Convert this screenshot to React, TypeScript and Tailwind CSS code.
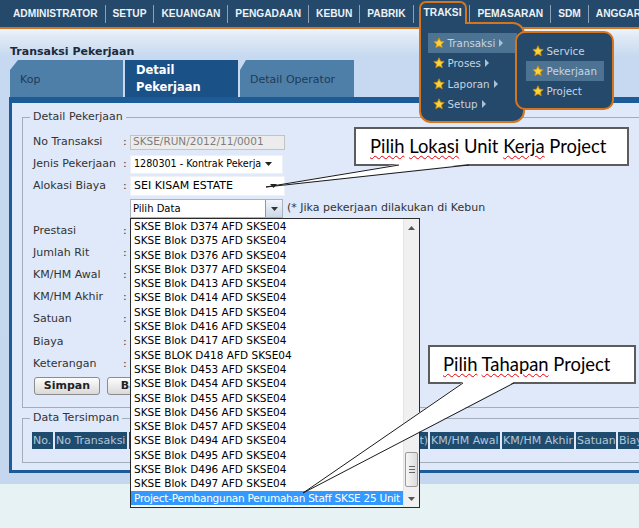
import React from 'react';

const navItems = ['ADMINISTRATOR', 'SETUP', 'KEUANGAN', 'PENGADAAN', 'KEBUN', 'PABRIK', 'TRAKSI', 'PEMASARAN', 'SDM', 'ANGGARAN'];

const blokItems = [
  ...['D374', 'D375', 'D376', 'D377', 'D413', 'D414', 'D415', 'D416', 'D417'].map((b) => `SKSE Blok ${b} AFD SKSE04`),
  'SKSE BLOK D418 AFD SKSE04',
  ...['D453', 'D454', 'D455', 'D456', 'D457', 'D494', 'D495', 'D496', 'D497'].map((b) => `SKSE Blok ${b} AFD SKSE04`),
];

const headerCells = [
  { title: 'No.', w: 'w-[21px]' },
  { title: 'No Transaksi', w: 'w-[72px]' },
  { title: 'Kendaraan', w: 'w-[90px]' },
  { title: 'Pekerjaan', w: 'w-[100px]' },
  { title: 'Prestasi (Rit)', w: 'w-[105px] text-right' },
  { title: 'KM/HM Awal', w: 'w-[70px]' },
  { title: 'KM/HM Akhir', w: 'w-[72px]' },
  { title: 'Satuan', w: 'w-[40px]' },
  { title: 'Biaya', w: 'w-[50px]' },
];

const Star = () => (
  <svg width="12" height="12" viewBox="0 0 24 24" className="shrink-0">
    <polygon
      points="12,1.5 15.1,8.3 22.5,9.1 17,14.1 18.5,21.5 12,17.8 5.5,21.5 7,14.1 1.5,9.1 8.9,8.3"
      fill="#f8d33c"
      stroke="#c8860d"
      strokeWidth="1.6"
      strokeLinejoin="round"
    />
  </svg>
);

const CaretRight = () => (
  <svg width="4" height="8" viewBox="0 0 4 8" className="ml-[4px] shrink-0">
    <polygon points="0,0 4,4 0,8" fill="#a9c0d8" />
  </svg>
);

const CaretDown = ({ color = '#222' }: { color?: string }) => (
  <svg width="7" height="4" viewBox="0 0 7 4" className="shrink-0">
    <polygon points="0,0 7,0 3.5,4" fill={color} />
  </svg>
);

const Row = ({ label, children }: { label: string; children?: React.ReactNode }) => (
  <div className="flex h-[22.2px] items-center">
    <span className="w-[88px] shrink-0 whitespace-nowrap">{label}</span>
    <span className="w-[9px] shrink-0 pl-[2px]">:</span>
    {children}
  </div>
);

const TraksiMenu = () => (
  <div className="relative ml-[5px] mr-[2px] mt-[1px] h-[22px] self-start rounded-t-[7px] border-2 border-b-0 border-[#d4761f] pl-[3px] pr-[4px] leading-[20px]">
    TRAKSI
    <div className="absolute left-[-2px] top-[19px] z-20 h-[101px] w-[106px] rounded-b-[12px] rounded-tr-[12px] border-2 border-[#d4761f] bg-[#24496a] font-['DejaVu_Sans',sans-serif] text-[10.3px] font-normal text-[#c7d4e1]">
      <div className="pl-[7px] pt-[9px]">
        {['Transaksi', 'Proses', 'Laporan', 'Setup'].map((m, i) => (
          <div key={m} className={`flex h-[20.3px] w-[89px] items-center pl-[5px] ${i === 0 ? 'bg-[#4d7393]' : ''}`}>
            <Star />
            <span className="ml-[3px]">{m}</span>
            <CaretRight />
          </div>
        ))}
      </div>
      {/* Sub menu */}
      <div className="absolute left-[94px] top-[7px] h-[79px] w-[99px] rounded-[10px] border-2 border-[#d4761f] bg-[#24496a] pl-[9px] pt-[8px]">
        {['Service', 'Pekerjaan', 'Project'].map((m, i) => (
          <div key={m} className={`flex h-[20px] w-[78px] items-center pl-[6px] ${i === 1 ? 'bg-[#4d7393]' : ''}`}>
            <Star />
            <span className="ml-[3px]">{m}</span>
          </div>
        ))}
      </div>
    </div>
    <div className="absolute left-0 right-0 top-[17px] z-30 h-[5px] bg-[#24496a]" />
  </div>
);

export default function App() {
  return (
    <div className="relative h-[528px] w-[639px] overflow-hidden bg-[#e6f2f3] font-['DejaVu_Sans',sans-serif] text-[11px] text-[#333]">
      {/* Top menu */}
      <div className="flex h-[27px] items-center bg-[#24496a] pl-[6px] font-['Liberation_Sans',Arial,sans-serif] text-[10.2px] font-bold whitespace-nowrap text-[#edf2f7]">
        {navItems.map((item, i) => (
          <React.Fragment key={item}>
            {i > 0 && <span className="h-[18px] w-px shrink-0 bg-[#8aa1b6]" />}
            {item === 'TRAKSI' ? <TraksiMenu /> : <span className="px-[7px]">{item}</span>}
          </React.Fragment>
        ))}
      </div>
      <div className="h-[2px] bg-[#d4761f]" />

      <div className="bg-[linear-gradient(to_bottom,#eef4fb_0px,#dfe9f6_8px,#c6d9f0_28px,#c4d7ef_100%)] pb-[11px] pl-[9px] pt-[16px]">
        <div className="h-[14px] pl-[1px] text-[11px] font-bold leading-[14px] text-[#1c2b3a]">Transaksi Pekerjaan</div>

        {/* Tabs */}
        <div className="mt-[1px] flex h-[37px] gap-[2px] pl-[1px]">
          <div className="flex w-[113px] items-center bg-[#4e7fa8] pl-[10px] pt-[3px] text-[#1f3b57] [clip-path:polygon(8px_0,100%_0,100%_100%,0_100%,0_10px)]">
            Kop
          </div>
          <div className="w-[113px] bg-[#1a5187] pl-[11px] pt-[2px] text-[11.5px] font-bold leading-[17px] text-white">
            Detail
            <br />
            Pekerjaan
          </div>
          <div className="flex w-[114px] items-center bg-[#4e7fa8] pl-[10px] pt-[3px] text-[#1f3b57] [clip-path:polygon(6px_0,100%_0,100%_100%,0_100%,0_10px)]">
            Detail Operator
          </div>
        </div>
        <div className="h-[6px] w-[700px] bg-[#1c5b97]" />

        {/* Panel */}
        <div className="h-[370px] w-[700px] border-b-[3px] border-l-[3px] border-[#1c5b97] bg-[#dfe9fa] pl-[10px] pt-[7px]">
          <fieldset className="w-[680px] border border-[#a3adb9] px-[10px] pb-[10px] pt-[7px]">
            <legend className="-ml-[3px] px-[3px] leading-[14px]">Detail Pekerjaan</legend>
            <Row label="No Transaksi">
              <div className="flex h-[15px] w-[155px] items-center border border-[#c3c3c3] bg-[#ececec] pl-[2px] text-[10.5px] text-[#7d7d7d]">
                SKSE/RUN/2012/11/0001
              </div>
            </Row>
            <Row label="Jenis Pekerjaan">
              <div className="flex h-[19px] w-[153px] items-center justify-between whitespace-nowrap border border-[#eef2f7] bg-white pl-[3px] pr-[10px] text-[9.6px] text-black">
                <span>1280301 - Kontrak Pekerja</span>
                <CaretDown />
              </div>
            </Row>
            <Row label="Alokasi Biaya">
              <div className="flex h-[20px] w-[155px] items-center justify-between border border-[#eef2f7] bg-white pl-[3px] pr-[7px] text-black">
                SEI KISAM ESTATE
                <CaretDown />
              </div>
            </Row>
            <div className="flex h-[22.2px] items-center pl-[97px]">
              <div className="flex h-[19px] w-[153px] items-stretch border border-[#a9b3be] bg-white text-[10px] text-black">
                <span className="flex flex-1 items-center pl-[2px]">Pilih Data</span>
                <span className="flex w-[17px] items-center justify-center border-l border-[#7b9ec0] bg-[linear-gradient(to_bottom,#f1f5fa,#cbd9e8)]">
                  <CaretDown color="#333" />
                </span>
              </div>
              <span className="ml-[4px] whitespace-nowrap text-[#333]">(* Jika pekerjaan dilakukan di Kebun</span>
            </div>
            {['Prestasi', 'Jumlah Rit', 'KM/HM Awal', 'KM/HM Akhir', 'Satuan', 'Biaya', 'Keterangan'].map((l) => (
              <Row key={l} label={l}>
                <div className="h-[18px] w-[150px] border border-[#c3c3c3] bg-white" />
              </Row>
            ))}
            <div className="flex h-[22.2px] items-center gap-[7px] pl-[1px]">
              <button className="h-[18px] w-[66px] rounded-[3px] border border-[#8c8c8c] bg-[linear-gradient(to_bottom,#fdfdfd,#d9d9d9)] text-[11px] font-bold text-[#222]">
                Simpan
              </button>
              <button className="h-[18px] w-[60px] rounded-[3px] border border-[#8c8c8c] bg-[linear-gradient(to_bottom,#fdfdfd,#d9d9d9)] text-[11px] font-bold text-[#222]">
                Batal
              </button>
            </div>
          </fieldset>

          <fieldset className="mt-[3px] w-[680px] border border-[#a3adb9] px-[9px] pb-[13px] pt-[7px]">
            <legend className="-ml-[2px] px-[3px] leading-[14px]">Data Tersimpan</legend>
            <div className="flex h-[17px] gap-[2px]">
              {headerCells.map((c) => (
                <div key={c.title} className={`${c.w} shrink-0 overflow-hidden whitespace-nowrap bg-[#1f4c6e] pl-[1px] leading-[17px] text-[#b3c7da]`}>
                  {c.title}
                </div>
              ))}
            </div>
          </fieldset>
        </div>
      </div>

      {/* Open dropdown list */}
      <div className="absolute left-[130px] top-[218px] h-[290px] w-[290px] border border-[#2b2b2b] bg-white text-[10.5px] text-black">
        <div className="pr-[16px]">
          {blokItems.map((b) => (
            <div key={b} className="h-[14.3px] whitespace-nowrap pl-[3px] leading-[14.3px]">
              {b}
            </div>
          ))}
          <div className="h-[14.3px] overflow-hidden whitespace-nowrap bg-[#3399ff] pl-[3px] leading-[14.3px] tracking-[-0.25px] text-white">
            Project-Pembangunan Perumahan Staff SKSE 25 Unit
          </div>
        </div>
        <div className="absolute bottom-0 right-0 top-0 w-[16px] border-l border-[#e4e4e4] bg-[#f0f0f0]">
          <div className="flex h-[17px] items-center justify-center">
            <svg width="7" height="4" viewBox="0 0 7 4">
              <polygon points="0,4 7,4 3.5,0" fill="#555" />
            </svg>
          </div>
          <div className="absolute left-[1px] right-[1px] top-[233px] flex h-[35px] flex-col items-center justify-center gap-[2px] rounded-[2px] border border-[#9a9a9a] bg-[linear-gradient(to_right,#f6f6f6,#dcdcdc)]">
            <span className="h-px w-[6px] bg-[#666]" />
            <span className="h-px w-[6px] bg-[#666]" />
            <span className="h-px w-[6px] bg-[#666]" />
          </div>
          <div className="absolute bottom-0 left-0 right-0 flex h-[17px] items-center justify-center">
            <CaretDown color="#555" />
          </div>
        </div>
      </div>

      {/* Callouts */}
      <div className="absolute left-[354px] top-[127px] flex h-[39px] w-[275px] items-center border-2 border-[#5c5c5c] bg-white pl-[14px] font-['Lato',sans-serif] text-[18.4px] text-black">
        <span>
          <span className="underline decoration-red-600 decoration-wavy decoration-1 underline-offset-2">Pilih</span>{' '}
          <span className="underline decoration-red-600 decoration-wavy decoration-1 underline-offset-2">Lokasi</span> Unit{' '}
          <span className="underline decoration-red-600 decoration-wavy decoration-1 underline-offset-2">Kerja</span> Project
        </span>
      </div>
      <div className="absolute left-[428px] top-[345px] flex h-[39px] w-[208px] items-center border-2 border-[#5c5c5c] bg-white pl-[13px] font-['Lato',sans-serif] text-[18.4px] text-black">
        <span>
          <span className="underline decoration-red-600 decoration-wavy decoration-1 underline-offset-2">Pilih</span>{' '}
          <span className="underline decoration-red-600 decoration-wavy decoration-1 underline-offset-2">Tahapan</span> Project
        </span>
      </div>

      <svg className="pointer-events-none absolute left-0 top-0" width="639" height="528">
        <polygon points="399,164 469,164 266,187" fill="white" />
        <polyline points="399,165 266,187 469,165" fill="none" stroke="#1a1a1a" strokeWidth="1" />
        <polygon points="463,382 514,382 303,493" fill="white" />
        <polyline points="463,383 303,493 514,383" fill="none" stroke="#1a1a1a" strokeWidth="1" />
      </svg>
    </div>
  );
}
